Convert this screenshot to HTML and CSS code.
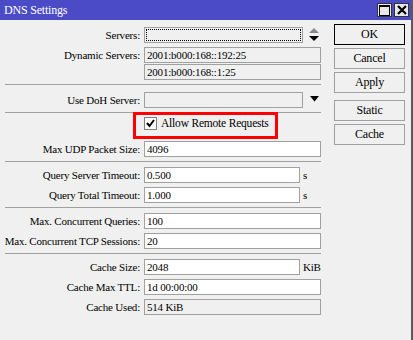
FILE: index.html
```html
<!DOCTYPE html>
<html>
<head>
    <title>DNS Settings</title>
    <meta charset="UTF-8">
    <link rel="stylesheet" href="styles.css">
</head>
<body>
<div class="window">
    <div class="titlebar">
        <span class="title">DNS Settings</span>
        <div class="tb-buttons">
            <span class="tb-btn"><span class="max-box"></span></span>
            <span class="tb-btn">
                <svg width="10" height="10" viewBox="0 0 10 10"><path d="M1 1 L9 9 M9 1 L1 9" stroke="#000" stroke-width="2.2"/></svg>
            </span>
        </div>
    </div>
    <div class="main">
        <div class="form">
            <div class="row">
                <label>Servers:</label>
                <div class="field mid readonly"><span class="focus"></span></div>
                <svg class="spin" width="10" height="14" viewBox="0 0 10 14">
                    <path d="M0 5 L5 0 L10 5 Z" fill="#8a8a8a"/>
                    <path d="M0 8 L5 13 L10 8 Z" fill="#000"/>
                </svg>
            </div>
            <div class="row">
                <label>Dynamic Servers:</label>
                <div class="field wide readonly">2001:b000:168::192:25</div>
            </div>
            <div class="row tight">
                <label></label>
                <div class="field wide readonly">2001:b000:168::1:25</div>
            </div>
            <div class="sep first"></div>
            <div class="row">
                <label>Use DoH Server:</label>
                <div class="field mid readonly"></div>
                <svg class="drop" width="9" height="6" viewBox="0 0 9 6"><path d="M0 0 L9 0 L4.5 5.5 Z" fill="#000"/></svg>
            </div>
            <div class="sep second"></div>
            <div class="row check-row">
                <label></label>
                <span class="checkbox">
                    <svg width="11" height="11" viewBox="0 0 11 11"><path d="M2 5 L4.5 8 L9 2" stroke="#000" stroke-width="2" fill="none"/></svg>
                </span>
                <span class="check-label">Allow Remote Requests</span>
                <span class="highlight"></span>
            </div>
            <div class="row">
                <label>Max UDP Packet Size:</label>
                <div class="field wide">4096</div>
            </div>
            <div class="sep"></div>
            <div class="row">
                <label>Query Server Timeout:</label>
                <div class="field short">0.500</div>
                <span class="unit">s</span>
            </div>
            <div class="row">
                <label>Query Total Timeout:</label>
                <div class="field short">1.000</div>
                <span class="unit">s</span>
            </div>
            <div class="sep"></div>
            <div class="row">
                <label>Max. Concurrent Queries:</label>
                <div class="field wide">100</div>
            </div>
            <div class="row">
                <label>Max. Concurrent TCP Sessions:</label>
                <div class="field wide">20</div>
            </div>
            <div class="sep"></div>
            <div class="row">
                <label>Cache Size:</label>
                <div class="field short">2048</div>
                <span class="unit">KiB</span>
            </div>
            <div class="row">
                <label>Cache Max TTL:</label>
                <div class="field wide">1d 00:00:00</div>
            </div>
            <div class="row">
                <label>Cache Used:</label>
                <div class="field wide readonly">514 KiB</div>
            </div>
        </div>
        <div class="buttons">
            <button class="btn default">OK</button>
            <button class="btn">Cancel</button>
            <button class="btn">Apply</button>
            <button class="btn spaced">Static</button>
            <button class="btn">Cache</button>
        </div>
    </div>
</div>
</body>
</html>
```

FILE: styles.css
```css
body {
    margin: 0;
    font-family: "Liberation Serif", "Times New Roman", serif;
    font-size: 11px;
    letter-spacing: -0.2px;
    color: #000;
}
.window {
    width: 413px;
    height: 340px;
    box-sizing: border-box;
    background: #f0f0f0;
    border-right: 2px solid #5a5a5a;
    overflow: hidden;
}
.titlebar {
    height: 20px;
    background: #4b4bc8;
    color: #fff;
    display: flex;
    align-items: center;
    justify-content: space-between;
    padding: 0 2px 0 4px;
}
.title {
    font-size: 12px;
}
.tb-buttons {
    display: flex;
    gap: 2px;
}
.tb-btn {
    width: 15px;
    height: 14px;
    box-sizing: border-box;
    background: #e8e8e8;
    border: 1px solid #333;
    display: flex;
    align-items: center;
    justify-content: center;
}
.max-box {
    width: 9px;
    height: 8px;
    border: 1px solid #000;
    border-top-width: 2px;
}
.main {
    display: flex;
}
.form {
    width: 324px;
    padding-top: 7px;
}
.row {
    display: flex;
    align-items: center;
    height: 16px;
    margin-bottom: 4px;
}
.row.tight {
    margin-top: -3px;
}
.row label {
    width: 140px;
    flex: none;
    text-align: right;
    margin-right: 4px;
    white-space: nowrap;
}
.field {
    height: 16px;
    box-sizing: border-box;
    border: 1px solid #a0a0a0;
    background: #fff;
    line-height: 14px;
    padding: 0 2px;
    white-space: nowrap;
    position: relative;
}
.field.readonly {
    background: #f0f0f0;
}
.field.wide {
    width: 177px;
}
.field.mid {
    width: 159px;
}
.field.short {
    width: 156px;
}
.focus {
    position: absolute;
    left: 1px;
    top: 1px;
    right: 1px;
    bottom: 1px;
    border: 1px dotted #000;
}
.spin {
    margin-left: 6px;
}
.drop {
    margin-left: 7px;
    margin-top: -3px;
}
.unit {
    margin-left: 3px;
}
.sep {
    height: 1px;
    width: 316px;
    margin: 1px 0 5px 5px;
    background: #a0a0a0;
}
.sep.first {
    margin-top: 4px;
    margin-bottom: 7px;
}
.sep.second {
    margin-top: 2px;
    margin-bottom: 0;
}
.check-row {
    height: 24px;
    position: relative;
}
.checkbox {
    width: 13px;
    height: 13px;
    box-sizing: border-box;
    border: 1px solid #808080;
    background: #fff;
    display: flex;
    align-items: center;
    justify-content: center;
    margin-top: -4px;
}
.check-label {
    margin-left: 4px;
    margin-top: -4px;
    font-size: 11.5px;
}
.highlight {
    position: absolute;
    left: 133px;
    top: -1px;
    width: 145px;
    height: 27px;
    box-sizing: border-box;
    border: 3px solid #f00;
}
.buttons {
    display: flex;
    flex-direction: column;
    gap: 3px;
    margin-left: 10px;
    padding-top: 4px;
}
.btn {
    width: 71px;
    height: 21px;
    padding: 0;
    font-family: inherit;
    font-size: 12px;
    letter-spacing: inherit;
    background: #f0f0f0;
    border: 1px solid #a0a0a0;
    color: #000;
}
.btn.default {
    border-color: #000;
}
.btn.spaced {
    margin-top: 4px;
}
```
